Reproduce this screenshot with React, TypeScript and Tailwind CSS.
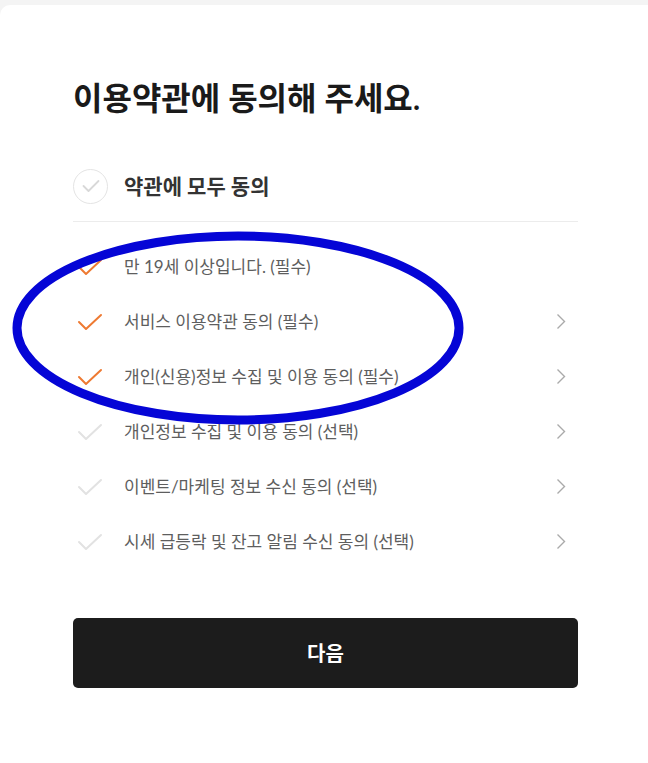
import { useState } from "react"

type Term = {
  label: string
  required: boolean
  detail: boolean
}

const terms: Term[] = [
  { label: "만 19세 이상입니다. (필수)", required: true, detail: false },
  { label: "서비스 이용약관 동의 (필수)", required: true, detail: true },
  { label: "개인(신용)정보 수집 및 이용 동의 (필수)", required: true, detail: true },
  { label: "개인정보 수집 및 이용 동의 (선택)", required: false, detail: true },
  { label: "이벤트/마케팅 정보 수신 동의 (선택)", required: false, detail: true },
  { label: "시세 급등락 및 잔고 알림 수신 동의 (선택)", required: false, detail: true },
]

function Check({ on }: { on: boolean }) {
  return (
    <svg width="26" height="18" viewBox="0 0 26 18" fill="none">
      <path
        d="M2 9 L9 16 L24 2"
        stroke={on ? "#ee7a32" : "#e2e2e2"}
        strokeWidth="2"
        strokeLinecap="round"
        strokeLinejoin="round"
      />
    </svg>
  )
}

function Chevron() {
  return (
    <svg width="10" height="17" viewBox="0 0 10 17" fill="none">
      <path d="M1.5 1.5 L8.5 8.5 L1.5 15.5" stroke="#aaaaaa" strokeWidth="1.4" />
    </svg>
  )
}

export default function App() {
  const [checked, setChecked] = useState<boolean[]>(terms.map((t) => t.required))
  const all = checked.every(Boolean)

  return (
    <div
      className="relative min-h-screen bg-[#f4f4f4] pt-[5px]"
      style={{ fontFamily: "Lato, 'Noto Sans CJK KR', sans-serif" }}
    >
      <div className="min-h-[758px] rounded-tl-[10px] bg-white pl-[73px] pr-[70px] pt-[72px]">
        <h1 className="text-[32px] font-semibold leading-[42px] text-[#1a1a1a]">
          이용약관에 동의해 주세요.
        </h1>

        <button
          className="mt-[46px] flex h-[42px] w-full items-center gap-[16px]"
          onClick={() => setChecked(terms.map(() => !all))}
        >
          <span className="flex h-[35px] w-[35px] items-center justify-center rounded-full border border-[#e4e4e4]">
            <svg width="18" height="14" viewBox="0 0 18 14" fill="none">
              <path d="M1.5 7 L6.5 12 L16.5 2" stroke="#d8d8d8" strokeWidth="1.8" strokeLinecap="round" strokeLinejoin="round" />
            </svg>
          </span>
          <span className="text-[21px] font-bold text-[#333333]">약관에 모두 동의</span>
        </button>

        <div className="mt-[14px] border-t border-[#ececec]" />

        <ul className="mt-[17px]">
          {terms.map((t, i) => (
            <li key={t.label} className="flex h-[55px] items-center">
              <button
                className="flex w-[51px] items-center pl-[4px]"
                onClick={() => setChecked(checked.map((c, j) => (j === i ? !c : c)))}
              >
                <Check on={checked[i]} />
              </button>
              <span className="flex-1 text-[17px] text-[#5e5e5e]">{t.label}</span>
              {t.detail && (
                <span className="mr-[12px] flex items-center">
                  <Chevron />
                </span>
              )}
            </li>
          ))}
        </ul>

        <button className="mt-[49px] flex h-[70px] w-full items-center justify-center rounded-[5px] bg-[#1c1c1c] text-[20px] font-bold text-white">
          다음
        </button>
      </div>

      <svg className="pointer-events-none absolute left-0 top-0" width="648" height="763">
        <ellipse cx="238" cy="328" rx="221" ry="92" fill="none" stroke="#0505d6" strokeWidth="9" />
      </svg>
    </div>
  )
}
